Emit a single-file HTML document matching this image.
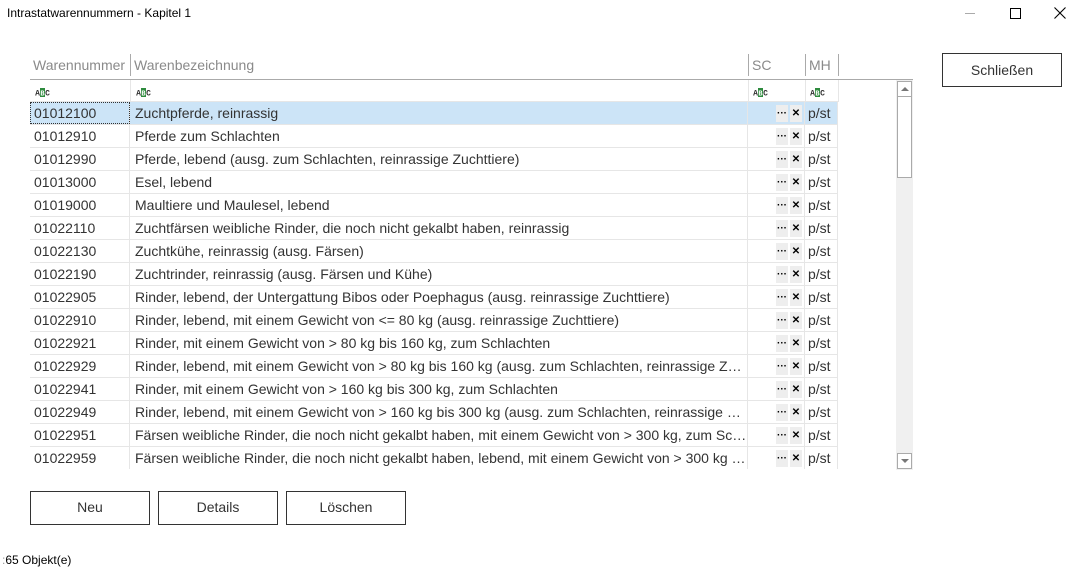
<!DOCTYPE html>
<html><head><meta charset="utf-8"><style>
*{box-sizing:border-box;margin:0;padding:0}
body{width:1078px;height:570px;background:#fff;position:relative;overflow:hidden;font-family:"Liberation Sans",sans-serif;color:#333}
.a{position:absolute}
.title{left:7px;top:6px;font-size:12px;color:#000}
.btn{position:absolute;border:1px solid #333;background:#fff;font-size:14px;text-align:center;color:#333}
.hd{position:absolute;top:56px;font-size:14px;color:#8a8a8a;height:20px;line-height:18px;padding-left:3px}
.vs{position:absolute;top:54px;width:1px;height:22px;background:#aaa}
.row{position:absolute;left:30px;width:808px;height:23px;font-size:14px;line-height:22px;border-bottom:1px solid #e6e6e6}
.row div{position:absolute;top:0;height:22px;white-space:nowrap;overflow:hidden}
.c1{left:0;width:100px;padding-left:4px;border-right:1px solid #e6e6e6}
.c2{left:100px;width:618px;padding-left:5px;border-right:1px solid #e6e6e6;text-overflow:ellipsis}
.c3{left:718px;width:57px;border-right:1px solid #e6e6e6}
.c4{left:775px;width:33px;padding-left:3px;border-right:1px solid #e6e6e6}
.b1,.b2{position:absolute;top:3px;width:12px;height:17px;background:#eee;font-size:10px;line-height:17px;text-align:center;color:#000;font-weight:bold}
.b1{left:28px}.b2{left:42px}
.sel{background:#cce4f7}
.abc{position:absolute;top:87px}
</style></head><body>
<div class="a title">Intrastatwarennummern - Kapitel 1</div>
<div class="a" style="left:965px;top:13px;width:10px;height:1px;background:#aaa"></div>
<div class="a" style="left:1010px;top:8px;width:11px;height:11px;border:1px solid #000"></div>
<svg class="a" style="left:1054px;top:7px" width="12" height="12"><path d="M0.5 0.5L11.5 11.5M11.5 0.5L0.5 11.5" stroke="#000" stroke-width="1.1"/></svg>
<div class="btn" style="left:942px;top:53px;width:120px;height:34px;line-height:32px">Schließen</div>

<div class="hd" style="left:30px">Warennummer</div>
<div class="vs" style="left:130px"></div>
<div class="hd" style="left:131px">Warenbezeichnung</div>
<div class="vs" style="left:748px"></div>
<div class="hd" style="left:749px">SC</div>
<div class="vs" style="left:805px"></div>
<div class="hd" style="left:806px">MH</div>
<div class="vs" style="left:838px"></div>
<div class="a" style="left:30px;top:79px;width:883px;height:1px;background:#aaa"></div>
<div class="a" style="left:30px;top:101px;width:808px;height:1px;background:#e6e6e6"></div>
<div class="a" style="left:130px;top:80px;width:1px;height:22px;background:#e6e6e6"></div>
<div class="a" style="left:748px;top:80px;width:1px;height:22px;background:#e6e6e6"></div>
<div class="a" style="left:805px;top:80px;width:1px;height:22px;background:#e6e6e6"></div>
<div class="a" style="left:838px;top:80px;width:1px;height:22px;background:#e6e6e6"></div>
<svg class="abc" style="left:35px" width="16" height="11"><rect x="5" y="1" width="5" height="9" fill="#2e8b3e"/><text x="2.5" y="8.5" font-size="8" font-family="Liberation Mono" font-weight="bold" text-anchor="middle" fill="#333">A</text><text x="7.5" y="8.5" font-size="7" font-family="Liberation Mono" font-weight="bold" text-anchor="middle" fill="#fff">B</text><text x="12.5" y="8.5" font-size="8" font-family="Liberation Mono" font-weight="bold" text-anchor="middle" fill="#333">C</text></svg>
<svg class="abc" style="left:136px" width="16" height="11"><rect x="5" y="1" width="5" height="9" fill="#2e8b3e"/><text x="2.5" y="8.5" font-size="8" font-family="Liberation Mono" font-weight="bold" text-anchor="middle" fill="#333">A</text><text x="7.5" y="8.5" font-size="7" font-family="Liberation Mono" font-weight="bold" text-anchor="middle" fill="#fff">B</text><text x="12.5" y="8.5" font-size="8" font-family="Liberation Mono" font-weight="bold" text-anchor="middle" fill="#333">C</text></svg>
<svg class="abc" style="left:753px" width="16" height="11"><rect x="5" y="1" width="5" height="9" fill="#2e8b3e"/><text x="2.5" y="8.5" font-size="8" font-family="Liberation Mono" font-weight="bold" text-anchor="middle" fill="#333">A</text><text x="7.5" y="8.5" font-size="7" font-family="Liberation Mono" font-weight="bold" text-anchor="middle" fill="#fff">B</text><text x="12.5" y="8.5" font-size="8" font-family="Liberation Mono" font-weight="bold" text-anchor="middle" fill="#333">C</text></svg>
<svg class="abc" style="left:810px" width="16" height="11"><rect x="5" y="1" width="5" height="9" fill="#2e8b3e"/><text x="2.5" y="8.5" font-size="8" font-family="Liberation Mono" font-weight="bold" text-anchor="middle" fill="#333">A</text><text x="7.5" y="8.5" font-size="7" font-family="Liberation Mono" font-weight="bold" text-anchor="middle" fill="#fff">B</text><text x="12.5" y="8.5" font-size="8" font-family="Liberation Mono" font-weight="bold" text-anchor="middle" fill="#333">C</text></svg>

<div class="row" style="top:102px"><div class="c1 sel" style="outline:1px dotted #333;outline-offset:-1px">01012100</div><div class="c2 sel">Zuchtpferde, reinrassig</div><div class="c3 sel"><span class="b1">···</span><span class="b2">✕</span></div><div class="c4 sel">p/st</div></div>
<div class="row" style="top:125px"><div class="c1">01012910</div><div class="c2">Pferde zum Schlachten</div><div class="c3"><span class="b1">···</span><span class="b2">✕</span></div><div class="c4">p/st</div></div>
<div class="row" style="top:148px"><div class="c1">01012990</div><div class="c2">Pferde, lebend (ausg. zum Schlachten, reinrassige Zuchttiere)</div><div class="c3"><span class="b1">···</span><span class="b2">✕</span></div><div class="c4">p/st</div></div>
<div class="row" style="top:171px"><div class="c1">01013000</div><div class="c2">Esel, lebend</div><div class="c3"><span class="b1">···</span><span class="b2">✕</span></div><div class="c4">p/st</div></div>
<div class="row" style="top:194px"><div class="c1">01019000</div><div class="c2">Maultiere und Maulesel, lebend</div><div class="c3"><span class="b1">···</span><span class="b2">✕</span></div><div class="c4">p/st</div></div>
<div class="row" style="top:217px"><div class="c1">01022110</div><div class="c2">Zuchtfärsen weibliche Rinder, die noch nicht gekalbt haben, reinrassig</div><div class="c3"><span class="b1">···</span><span class="b2">✕</span></div><div class="c4">p/st</div></div>
<div class="row" style="top:240px"><div class="c1">01022130</div><div class="c2">Zuchtkühe, reinrassig (ausg. Färsen)</div><div class="c3"><span class="b1">···</span><span class="b2">✕</span></div><div class="c4">p/st</div></div>
<div class="row" style="top:263px"><div class="c1">01022190</div><div class="c2">Zuchtrinder, reinrassig (ausg. Färsen und Kühe)</div><div class="c3"><span class="b1">···</span><span class="b2">✕</span></div><div class="c4">p/st</div></div>
<div class="row" style="top:286px"><div class="c1">01022905</div><div class="c2">Rinder, lebend, der Untergattung Bibos oder Poephagus (ausg. reinrassige Zuchttiere)</div><div class="c3"><span class="b1">···</span><span class="b2">✕</span></div><div class="c4">p/st</div></div>
<div class="row" style="top:309px"><div class="c1">01022910</div><div class="c2">Rinder, lebend, mit einem Gewicht von &lt;= 80 kg (ausg. reinrassige Zuchttiere)</div><div class="c3"><span class="b1">···</span><span class="b2">✕</span></div><div class="c4">p/st</div></div>
<div class="row" style="top:332px"><div class="c1">01022921</div><div class="c2">Rinder, mit einem Gewicht von &gt; 80 kg bis 160 kg, zum Schlachten</div><div class="c3"><span class="b1">···</span><span class="b2">✕</span></div><div class="c4">p/st</div></div>
<div class="row" style="top:355px"><div class="c1">01022929</div><div class="c2">Rinder, lebend, mit einem Gewicht von &gt; 80 kg bis 160 kg (ausg. zum Schlachten, reinrassige Zuchttiere)</div><div class="c3"><span class="b1">···</span><span class="b2">✕</span></div><div class="c4">p/st</div></div>
<div class="row" style="top:378px"><div class="c1">01022941</div><div class="c2">Rinder, mit einem Gewicht von &gt; 160 kg bis 300 kg, zum Schlachten</div><div class="c3"><span class="b1">···</span><span class="b2">✕</span></div><div class="c4">p/st</div></div>
<div class="row" style="top:401px"><div class="c1">01022949</div><div class="c2">Rinder, lebend, mit einem Gewicht von &gt; 160 kg bis 300 kg (ausg. zum Schlachten, reinrassige Zuchttiere)</div><div class="c3"><span class="b1">···</span><span class="b2">✕</span></div><div class="c4">p/st</div></div>
<div class="row" style="top:424px"><div class="c1">01022951</div><div class="c2">Färsen weibliche Rinder, die noch nicht gekalbt haben, mit einem Gewicht von &gt; 300 kg, zum Schlachten</div><div class="c3"><span class="b1">···</span><span class="b2">✕</span></div><div class="c4">p/st</div></div>
<div class="row" style="top:447px;border-bottom:none"><div class="c1">01022959</div><div class="c2">Färsen weibliche Rinder, die noch nicht gekalbt haben, lebend, mit einem Gewicht von &gt; 300 kg (ausg. zum Schlachten)</div><div class="c3"><span class="b1">···</span><span class="b2">✕</span></div><div class="c4">p/st</div></div>

<div class="a" style="left:896px;top:80px;width:17px;height:390px;background:#f0f0f0"></div>
<div class="a" style="left:897px;top:81px;width:15px;height:16px;border:1px solid #aaa;background:#fff"><div class="a" style="left:3px;top:5px;width:0;height:0;border-left:4px solid transparent;border-right:4px solid transparent;border-bottom:4px solid #777"></div></div>
<div class="a" style="left:897px;top:96px;width:15px;height:82px;border:1px solid #aaa;background:#fff"></div>
<div class="a" style="left:897px;top:453px;width:15px;height:16px;border:1px solid #aaa;background:#fff"><div class="a" style="left:3px;top:5px;width:0;height:0;border-left:4px solid transparent;border-right:4px solid transparent;border-top:4px solid #777"></div></div>

<div class="btn" style="left:30px;top:491px;width:120px;height:34px;line-height:30px">Neu</div>
<div class="btn" style="left:158px;top:491px;width:120px;height:34px;line-height:30px">Details</div>
<div class="btn" style="left:286px;top:491px;width:120px;height:34px;line-height:30px">Löschen</div>

<div class="a" style="left:2px;top:553px;font-size:12px;color:#000"><span style="color:#999">:</span>65 Objekt(e)</div>
</body></html>
